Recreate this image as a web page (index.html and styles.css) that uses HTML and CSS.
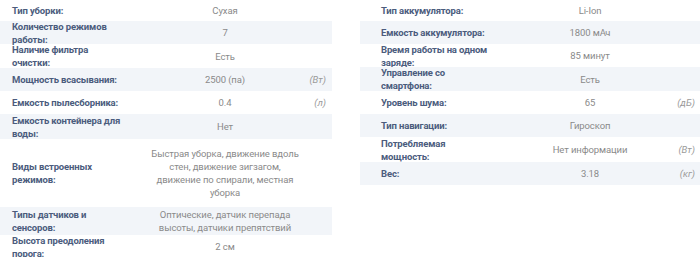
FILE: index.html
```html
<!DOCTYPE html>
<html lang="ru">
<head>
<meta charset="utf-8">
<link rel="stylesheet" href="styles.css">
</head>
<body>
<div class="specs">
  <div class="col col--left">
    <div class="row"><div class="label">Тип уборки:</div><div class="value">Сухая</div><div class="unit"></div></div>
    <div class="row"><div class="label">Количество режимов работы:</div><div class="value">7</div><div class="unit"></div></div>
    <div class="row row--24"><div class="label">Наличие фильтра очистки:</div><div class="value">Есть</div><div class="unit"></div></div>
    <div class="row"><div class="label">Мощность всасывания:</div><div class="value">2500 (па)</div><div class="unit">(Вт)</div></div>
    <div class="row"><div class="label">Емкость пылесборника:</div><div class="value">0.4</div><div class="unit">(л)</div></div>
    <div class="row row--25"><div class="label">Емкость контейнера для воды:</div><div class="value">Нет</div><div class="unit"></div></div>
    <div class="row row--tall"><div class="label">Виды встроенных режимов:</div><div class="value">Быстрая уборка, движение вдоль стен, движение зигзагом, движение по спирали, местная уборка</div><div class="unit"></div></div>
    <div class="row row--pad"><div class="label">Типы датчиков и сенсоров:</div><div class="value">Оптические, датчик перепада высоты, датчики препятствий</div><div class="unit"></div></div>
    <div class="row"><div class="label">Высота преодоления порога:</div><div class="value">2 см</div><div class="unit"></div></div>
  </div>
  <div class="col col--right">
    <div class="row"><div class="label">Тип аккумулятора:</div><div class="value">Li-Ion</div><div class="unit"></div></div>
    <div class="row"><div class="label">Емкость аккумулятора:</div><div class="value">1800 мАч</div><div class="unit"></div></div>
    <div class="row"><div class="label">Время работы на одном заряде:</div><div class="value">85 минут</div><div class="unit"></div></div>
    <div class="row row--24"><div class="label">Управление со смартфона:</div><div class="value">Есть</div><div class="unit"></div></div>
    <div class="row"><div class="label">Уровень шума:</div><div class="value">65</div><div class="unit">(дБ)</div></div>
    <div class="row"><div class="label">Тип навигации:</div><div class="value">Гироскоп</div><div class="unit"></div></div>
    <div class="row row--25"><div class="label">Потребляемая мощность:</div><div class="value">Нет информации</div><div class="unit">(Вт)</div></div>
    <div class="row"><div class="label">Вес:</div><div class="value">3.18</div><div class="unit">(кг)</div></div>
  </div>
</div>
</body>
</html>
```

FILE: styles.css
```css
html, body {
  margin: 0;
  padding: 0;
  background: #ffffff;
}
body {
  font-family: Roboto, "Liberation Sans", sans-serif;
  font-size: 9.5px;
  line-height: 13px;
}
.specs {
  display: flex;
  gap: 28px;
  align-items: flex-start;
}
.col {
  display: flex;
  flex-direction: column;
  flex: none;
}
.col--left {
  width: 332px;
}
.col--right {
  width: 341px;
}
.row {
  display: grid;
  grid-template-columns: 133px 160px 1fr;
  align-items: center;
  min-height: 23px;
  padding: 0 6px 0 12px;
}
.col--right .row {
  grid-template-columns: 129px 160px 1fr;
  padding-left: 21px;
}
.row:first-child {
  min-height: 21px;
}
.row:nth-child(even) {
  background: #f2f5f9;
}
.row--24 {
  min-height: 24px;
}
.row--25 {
  min-height: 25px;
}
.row--tall {
  padding-top: 10px;
  padding-bottom: 10px;
}
.row--pad {
  padding-top: 2px;
  padding-bottom: 3px;
}
.label,
.value {
  margin: -2px 0;
}
.label {
  font-weight: bold;
  color: #4b5c7d;
  letter-spacing: -0.15px;
  padding-right: 22px;
}
.value {
  color: #8a8a8a;
  letter-spacing: -0.1px;
  text-align: center;
  padding: 0 5px;
}
.unit {
  color: #9a9a9a;
  font-style: italic;
  text-align: right;
}
```
